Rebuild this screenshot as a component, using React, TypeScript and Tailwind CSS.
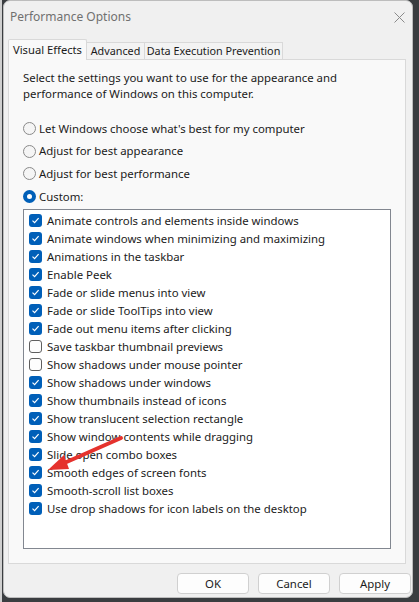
const ITEMS: [string, boolean][] = [
  ["Animate controls and elements inside windows", true],
  ["Animate windows when minimizing and maximizing", true],
  ["Animations in the taskbar", true],
  ["Enable Peek", true],
  ["Fade or slide menus into view", true],
  ["Fade or slide ToolTips into view", true],
  ["Fade out menu items after clicking", true],
  ["Save taskbar thumbnail previews", false],
  ["Show shadows under mouse pointer", false],
  ["Show shadows under windows", true],
  ["Show thumbnails instead of icons", true],
  ["Show translucent selection rectangle", true],
  ["Show window contents while dragging", true],
  ["Slide open combo boxes", true],
  ["Smooth edges of screen fonts", true],
  ["Smooth-scroll list boxes", true],
  ["Use drop shadows for icon labels on the desktop", true],
];

const RADIOS: [string, boolean][] = [
  ["Let Windows choose what's best for my computer", false],
  ["Adjust for best appearance", false],
  ["Adjust for best performance", false],
  ["Custom:", true],
];

function Check({ on }: { on: boolean }) {
  if (!on)
    return <span className="h-[13px] w-[13px] shrink-0 rounded-[3px] border border-[#5f5f5f] bg-[#fdfdfd]" />;
  return (
    <span className="flex h-[13px] w-[13px] shrink-0 items-center justify-center rounded-[3px] bg-[#005fb8]">
      <svg width="9" height="9" viewBox="0 0 9 9">
        <path d="M1.5 4.6 L3.6 6.6 L7.6 2.2" fill="none" stroke="#fff" strokeWidth="1.2" />
      </svg>
    </span>
  );
}

function Radio({ on }: { on: boolean }) {
  if (on)
    return (
      <span className="flex h-[13px] w-[13px] shrink-0 items-center justify-center rounded-full bg-[#005fb8]">
        <span className="h-[5px] w-[5px] rounded-full bg-white" />
      </span>
    );
  return <span className="h-[13px] w-[13px] shrink-0 rounded-full border border-[#8a8a8a] bg-[#f5f5f5]" />;
}

export default function App() {
  return (
    <div className="h-[602px] w-[419px] overflow-hidden border-l-2 border-[#cfcfcf] bg-[#3a3d40] pl-px text-[11.4px] text-[#1b1b1b] [font-family:'Noto_Sans',sans-serif]">
      <div className="relative flex h-[598px] w-[410px] flex-col rounded-[7px] border border-[#bdbdbd] bg-[#f0f0f0]">
        {/* title bar */}
        <div className="flex h-[32px] items-center justify-between pl-[6px] pr-[7px]">
          <span className="text-[12px] text-[#707070]">Performance Options</span>
          <svg width="11" height="11" viewBox="0 0 11 11">
            <path d="M0.5 0.5 L10.5 10.5 M10.5 0.5 L0.5 10.5" stroke="#8a8a8a" strokeWidth="1" />
          </svg>
        </div>

        {/* tabs */}
        <div className="mt-[5px] flex h-[21px] items-end whitespace-nowrap pl-[4px] text-[10.8px]">
          <div className="relative z-10 -mb-px flex h-[21px] w-[79px] items-center justify-center rounded-t-[2px] border border-b-0 border-[#d9d9d9] bg-[#f9f9f9] text-[11.2px]">
            Visual Effects
          </div>
          <div className="flex h-[17px] w-[58px] items-center justify-center border border-b-0 border-l-0 border-[#d9d9d9] bg-[#f3f3f3]">
            Advanced
          </div>
          <div className="flex h-[17px] w-[138px] items-center justify-center border border-b-0 border-l-0 border-[#d9d9d9] bg-[#f3f3f3]">
            Data Execution Prevention
          </div>
        </div>

        {/* tab panel */}
        <div className="ml-[4px] mr-[6px] flex h-[505px] flex-col border border-[#d9d9d9] bg-[#f9f9f9] px-[14px] pt-[10px]">
          <p className="leading-[16px]">
            Select the settings you want to use for the appearance and
            <br />
            performance of Windows on this computer.
          </p>

          <div className="mt-[15px] flex flex-col">
            {RADIOS.map(([label, on]) => (
              <div key={label} className="flex h-[22.7px] items-center gap-[3px]">
                <Radio on={on} />
                <span>{label}</span>
              </div>
            ))}
          </div>

          <div className="mt-px h-[340px] border border-[#828790] bg-white pl-[5px] pt-[2px]">
            {ITEMS.map(([label, on]) => (
              <div key={label} className="flex h-[18px] items-center gap-[5px]">
                <Check on={on} />
                <span>{label}</span>
              </div>
            ))}
          </div>
        </div>

        {/* buttons */}
        <div className="mt-[9px] flex justify-end gap-[9px] pr-[1px]">
          {["OK", "Cancel", "Apply"].map((b) => (
            <button
              key={b}
              className="h-[21px] w-[72px] rounded-[4px] border border-[#d0d0d0] bg-[#fdfdfd] text-[11.4px]"
            >
              {b}
            </button>
          ))}
        </div>

        {/* annotation arrow */}
        <svg className="pointer-events-none absolute left-0 top-0" width="419" height="602">
          <path d="M117 437 L58 463" stroke="#e5322d" strokeWidth="4" strokeLinecap="round" />
          <path d="M44 469 L60 454 L65 468 Z" fill="#e5322d" />
        </svg>
      </div>
    </div>
  );
}
